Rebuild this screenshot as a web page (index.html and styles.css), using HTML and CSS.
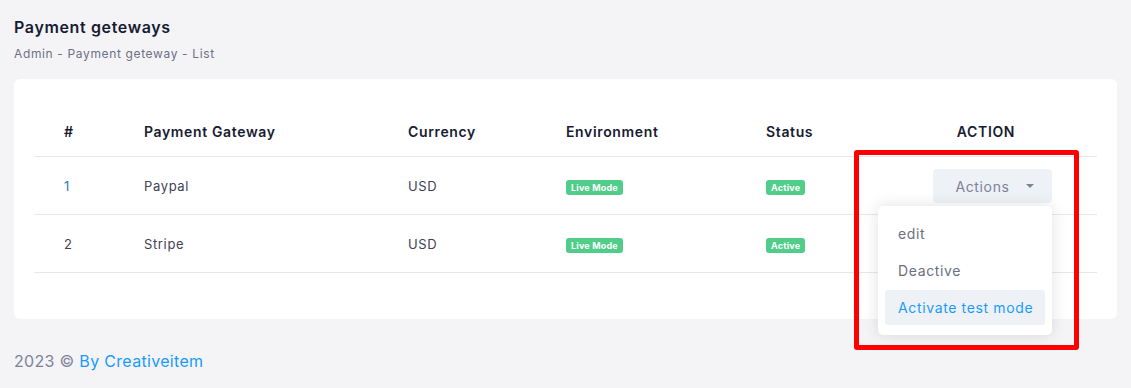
FILE: index.html
```html
<!DOCTYPE html>
<html lang="en">
<head>
    <meta charset="UTF-8">
    <title>Payment geteways</title>
    <link rel="stylesheet" href="styles.css">
</head>
<body>
    <div class="page-head">
        <h1>Payment geteways</h1>
        <p class="crumbs">Admin - Payment geteway - List</p>
    </div>

    <div class="card">
        <table class="gateways">
            <thead>
                <tr>
                    <th class="c-num">#</th>
                    <th class="c-name">Payment Gateway</th>
                    <th class="c-cur">Currency</th>
                    <th class="c-env">Environment</th>
                    <th class="c-status">Status</th>
                    <th class="c-action">ACTION</th>
                </tr>
            </thead>
            <tbody>
                <tr>
                    <td class="c-num link">1</td>
                    <td>Paypal</td>
                    <td>USD</td>
                    <td><span class="badge">Live Mode</span></td>
                    <td><span class="badge">Active</span></td>
                    <td class="c-action">
                        <div class="action-wrap">
                            <button class="btn-actions">Actions <span class="caret"></span></button>
                            <ul class="menu">
                                <li>edit</li>
                                <li>Deactive</li>
                                <li class="active">Activate test mode</li>
                            </ul>
                        </div>
                        <div class="highlight"></div>
                    </td>
                </tr>
                <tr>
                    <td class="c-num">2</td>
                    <td>Stripe</td>
                    <td>USD</td>
                    <td><span class="badge">Live Mode</span></td>
                    <td><span class="badge">Active</span></td>
                    <td class="c-action"></td>
                </tr>
            </tbody>
        </table>
    </div>

    <footer>2023 &copy; <a href="#">By Creativeitem</a></footer>
</body>
</html>
```

FILE: styles.css
```css
/* Reset */
* {
    margin: 0;
    padding: 0;
    box-sizing: border-box;
}

body {
    font-family: 'Inter', 'Open Sans', sans-serif;
    background: #f4f4f7;
    color: #3f4254;
    letter-spacing: 0.04em;
    padding: 0 14px;
}

/* Page header */
.page-head {
    padding-top: 17px;
    height: 79px;
}

.page-head h1 {
    font-size: 16px;
    font-weight: 600;
    color: #181c32;
    line-height: 20px;
}

.crumbs {
    margin-top: 10px;
    font-size: 12px;
    color: #6c7086;
    line-height: 14px;
}

/* Card */
.card {
    background: #fff;
    border-radius: 6px;
    padding: 20px 20px 46px;
}

.gateways {
    width: 100%;
    border-collapse: collapse;
    table-layout: fixed;
}

.gateways th,
.gateways td {
    text-align: left;
    padding: 0 30px;
    border-bottom: 1px solid #e6e6ee;
    white-space: nowrap;
}

.gateways th {
    height: 57px;
    font-size: 14px;
    font-weight: 600;
    color: #181c32;
    padding-top: 8px;
}

.gateways td {
    height: 58px;
    font-size: 13px;
    color: #3f4254;
    padding-top: 2px;
}

.c-num { width: 80px; }
.c-name { width: 264px; }
.c-cur { width: 158px; }
.c-env { width: 200px; }
.c-status { width: 139px; }

.gateways .c-action {
    text-align: center;
    position: relative;
}

.link {
    color: #2b7fb3 !important;
}

.badge {
    display: inline-block;
    background: #50cd89;
    color: #fff;
    font-size: 9px;
    font-weight: 700;
    letter-spacing: 0.02em;
    line-height: 15px;
    padding: 0 5px;
    border-radius: 3px;
}

/* Actions dropdown */
.action-wrap {
    display: inline-block;
    position: relative;
    margin-left: 13px;
}

.btn-actions {
    width: 119px;
    height: 34px;
    border: none;
    border-radius: 4px;
    background: #eef1f6;
    color: #7e8299;
    font-family: inherit;
    letter-spacing: inherit;
    font-size: 14px;
    display: flex;
    align-items: center;
    justify-content: center;
    gap: 16px;
    padding-left: 4px;
}

.caret {
    width: 0;
    height: 0;
    border-left: 4px solid transparent;
    border-right: 4px solid transparent;
    border-top: 4px solid #7e8299;
}

.menu {
    position: absolute;
    top: 37px;
    right: 0;
    width: 174px;
    background: #fff;
    list-style: none;
    border-radius: 5px;
    box-shadow: 0 0 16px rgba(0, 0, 0, 0.12);
    padding: 10px 7px;
    text-align: left;
    z-index: 2;
}

.menu li {
    font-size: 14px;
    color: #6b6f80;
    padding: 0 13px;
    line-height: 35px;
    margin-bottom: 2px;
}

.menu li.active {
    background: #eef2f7;
    color: #1a9bfc;
    border-radius: 3px;
    margin-bottom: 0;
}

/* red annotation box */
.highlight {
    position: absolute;
    left: -21px;
    top: -7px;
    width: 225px;
    height: 200px;
    border: 5px solid #f00;
    border-radius: 3px;
    z-index: 3;
    pointer-events: none;
}

/* Footer */
footer {
    margin-top: 32px;
    font-size: 16px;
    letter-spacing: 0.02em;
    color: #7e8299;
}

footer a {
    color: #1a9bfc;
    text-decoration: none;
}
```
